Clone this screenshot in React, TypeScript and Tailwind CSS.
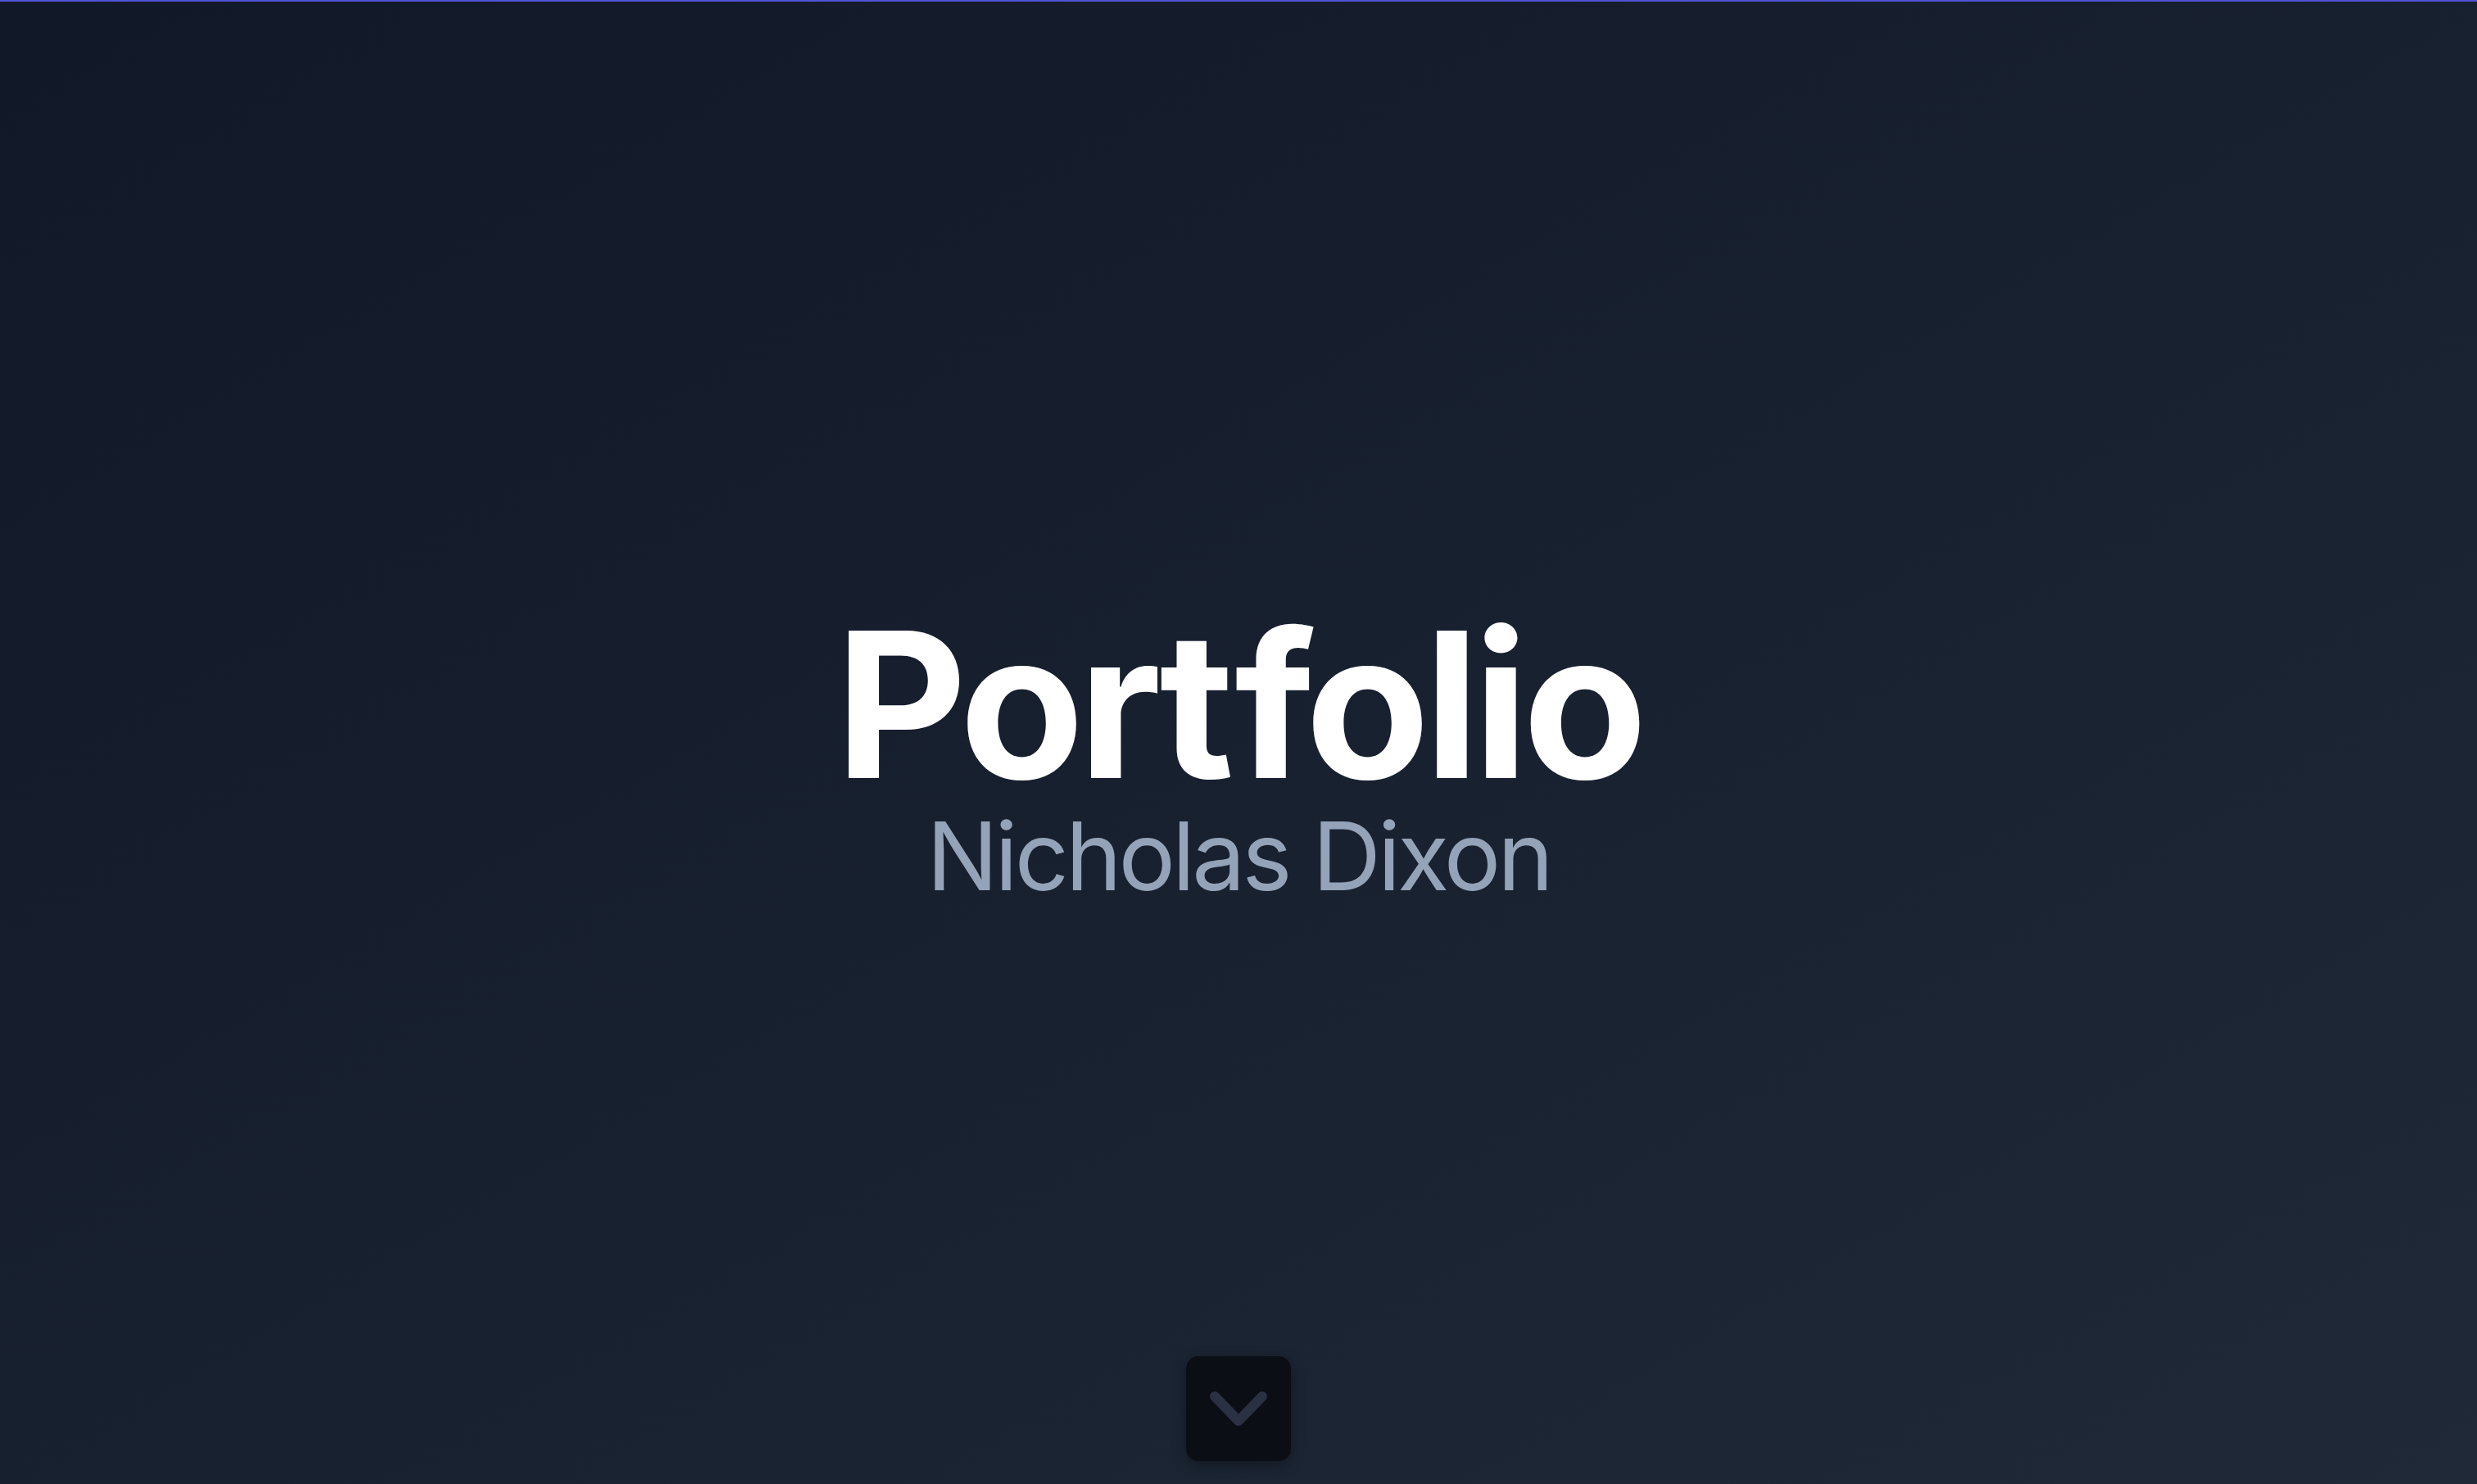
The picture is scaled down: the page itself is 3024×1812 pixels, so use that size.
import React from "react";

export default function App() {
  return (
    <div className="relative flex h-[1812px] w-full flex-col overflow-hidden bg-gradient-to-br from-[#111827] to-[#1f2937]" style={{ fontFamily: "Inter, 'Noto Sans', sans-serif" }}>
      <div className="h-[2px] w-full bg-[#5053d2]" />
      <div className="flex flex-1 flex-col items-center justify-center pt-[24px] [font-variant-ligatures:none]">
        <h1 className="text-[248px] font-bold leading-none tracking-[-7px] text-white">
          Por<span className="mr-[8px]">t</span>folio
        </h1>
        <p className="mt-[3px] text-[116px] font-normal leading-none tracking-[-4px] text-[#94a3b8]">Nicholas Dixon</p>
      </div>
      <div className="absolute bottom-[28px] left-1/2 flex h-[128px] w-[128px] -translate-x-1/2 items-center justify-center rounded-[15px] bg-[#0b0e15] shadow-[0_4px_16px_rgba(0,0,0,0.35)]">
        <svg width="128" height="128" viewBox="0 0 128 128" fill="none">
          <polyline points="35,49 64,79 93,49" stroke="#2a3143" strokeWidth="12" strokeLinecap="round" strokeLinejoin="round" />
        </svg>
      </div>
    </div>
  );
}
